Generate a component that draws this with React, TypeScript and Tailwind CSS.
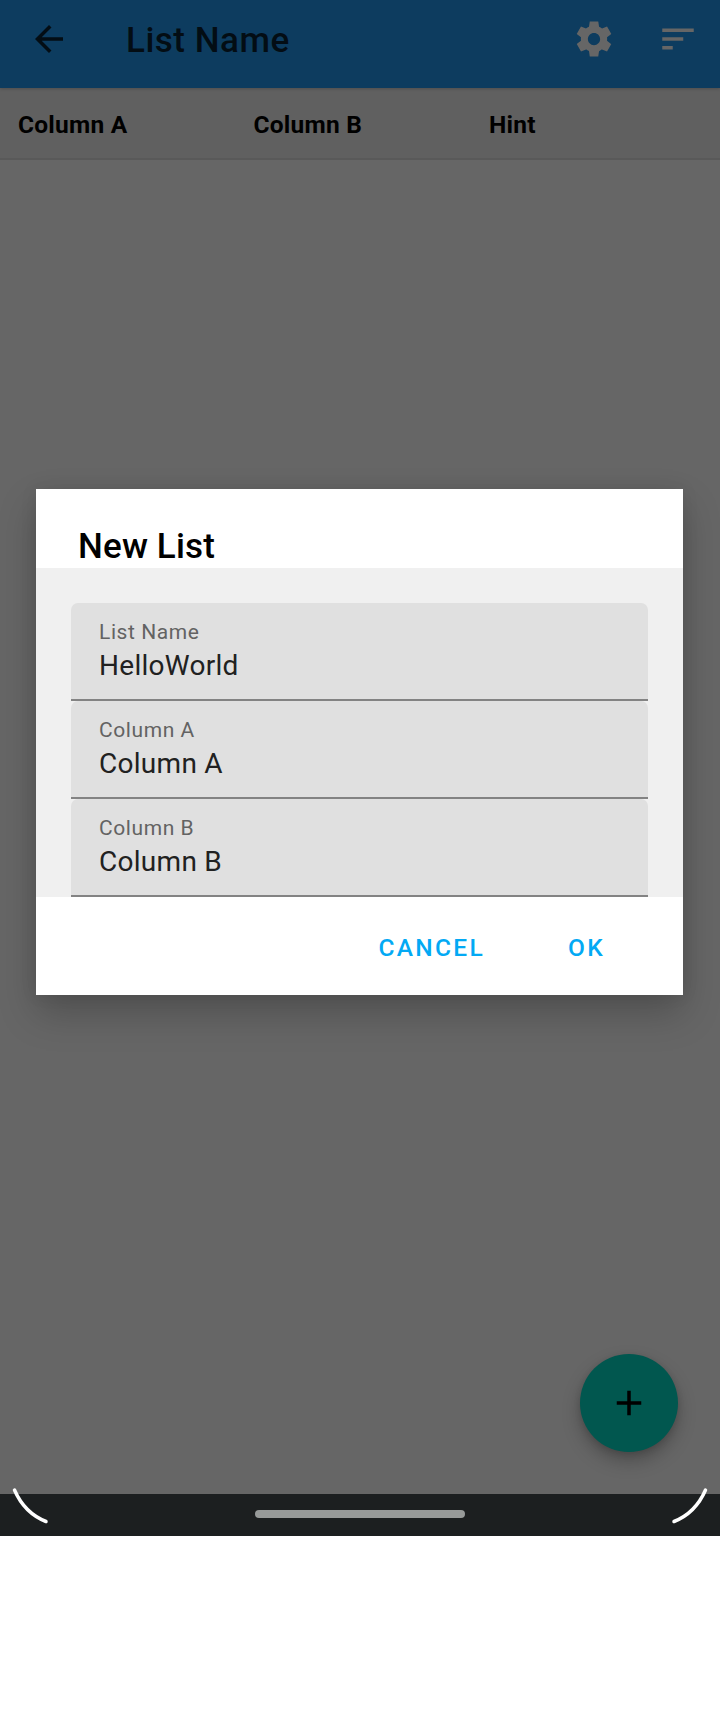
import React from "react";

const columns = ["Column A", "Column B", "Hint"];

const fields = [
  { label: "List Name", value: "HelloWorld" },
  { label: "Column A", value: "Column A" },
  { label: "Column B", value: "Column B" },
];

function Icon({ d, className }: { d: string; className: string }) {
  return (
    <svg viewBox="0 0 24 24" className={`size-[42px] shrink-0 fill-current ${className}`}>
      <path d={d} />
    </svg>
  );
}

const BACK = "M20 11H7.83l5.59-5.59L12 4l-8 8 8 8 1.41-1.41L7.83 13H20v-2z";
const SORT = "M3 18h6v-2H3v2zM3 6v2h18V6H3zm0 7h12v-2H3v2z";
const PLUS = "M19 13h-6v6h-2v-6H5v-2h6V5h2v6h6v2z";
const GEAR =
  "M19.44 12.99l-.01.02c.04-.33.08-.67.08-1.01 0-.34-.03-.66-.07-.99l.01.02 2.44-1.92-2.43-4.22-2.87 1.16.01.01c-.52-.4-1.09-.74-1.71-1h.01L14.44 2H9.57l-.44 3.07h.01c-.62.26-1.19.6-1.71 1l.01-.01-2.88-1.17-2.44 4.22 2.44 1.92.01-.02c-.04.33-.07.65-.07.99 0 .34.03.68.08 1.01l-.01-.02-2.1 1.65-.33.26 2.43 4.2 2.88-1.15-.02-.04c.53.41 1.1.75 1.73 1.01h-.03L9.58 22h4.85s.03-.18.06-.42l.38-2.65h-.01c.62-.26 1.2-.6 1.73-1.01l-.02.04 2.88 1.15 2.43-4.2s-.14-.12-.33-.26l-2.11-1.66zM12 15.5c-1.93 0-3.5-1.57-3.5-3.5s1.57-3.5 3.5-3.5 3.5 1.57 3.5 3.5-1.57 3.5-3.5 3.5z";

function AppBar() {
  return (
    <header className="relative z-10 flex h-[88px] items-start bg-[#0d3c5f] pl-7 pr-[21px] pt-[18px] shadow-[0_1px_3px_rgba(0,0,0,0.2)]">
      <Icon d={BACK} className="text-[#030d14]" />
      <h1 className="ml-[56px] flex-1 pt-[2px] text-[35px] font-medium leading-[42px] tracking-[0.5px] text-[#030d14]">
        List Name
      </h1>
      <Icon d={GEAR} className="text-[#666666]" />
      <Icon d={SORT} className="ml-[42px] text-[#666666]" />
    </header>
  );
}

function ColumnHeader() {
  return (
    <div className="grid h-[72px] grid-cols-[235.5px_235.5px_1fr] items-center border-b-2 border-[#595959] bg-[#606060] pl-[18px] pt-[3px]">
      {columns.map((name) => (
        <span key={name} className="text-[24.5px] font-bold leading-8 tracking-[0.25px] text-black">
          {name}
        </span>
      ))}
    </div>
  );
}

function NavigationBar() {
  return (
    <footer className="relative flex h-[42px] justify-center bg-[#1c1f20] pt-4">
      <div className="h-2 w-[210px] rounded-full bg-[#979a99]" />
      <svg
        viewBox="0 0 720 50"
        className="absolute bottom-0 left-0 h-[50px] w-[720px] fill-none stroke-white"
        strokeWidth="3.5"
        strokeLinecap="round"
      >
        <path d="M14.5 4Q24.5 27 46 35.5" />
        <path d="M705.5 4Q695.5 27 674 35.5" />
      </svg>
    </footer>
  );
}

function Field({ label, value }: { label: string; value: string }) {
  return (
    <div className="bg-[#f0f0f0]">
      <div className="h-[98px] rounded-t-[7px] border-b-2 border-[#838383] bg-[#e0e0e0] pl-7 pt-[17px]">
        <div className="text-[21px] leading-[25px] tracking-[0.58px] text-[#636363]">{label}</div>
        <div className="mt-[4px] text-[28px] leading-[33px] tracking-[0.01em] text-[#212121]">{value}</div>
      </div>
    </div>
  );
}

function NewListDialog() {
  return (
    <div className="absolute inset-0 px-9 pt-[489px]">
      <section
        role="dialog"
        className="h-[506px] w-[647px] bg-white shadow-[0_18px_36px_rgba(0,0,0,0.22),0_0_16px_rgba(0,0,0,0.08)]"
      >
        <h2 className="h-[79px] pl-[42px] pt-[37px] text-[35px] font-medium leading-[41px] tracking-[0.15px] text-black">
          New List
        </h2>
        <div className="bg-[#f0f0f0] px-[35px] pt-[35px]">
          {fields.map((field) => (
            <Field key={field.label} {...field} />
          ))}
        </div>
        <div className="flex justify-end gap-[83px] pr-[78px] pt-[35px] text-[24.5px] font-medium leading-8 tracking-[2.3px] text-[#03a9f4]">
          <button>CANCEL</button>
          <button>OK</button>
        </div>
      </section>
    </div>
  );
}

export default function App() {
  return (
    <div className="h-[1712px] w-[720px] overflow-hidden bg-white font-['Roboto',sans-serif]">
      <div className="relative flex h-[1536px] flex-col bg-[#666666]">
        <AppBar />
        <ColumnHeader />
        <main className="flex flex-1 items-end justify-end pb-[42px] pr-[42px]">
          <button className="flex size-[98px] items-center justify-center rounded-full bg-[#01574f] text-black shadow-[0_9px_18px_rgba(0,0,0,0.25),0_2px_6px_rgba(0,0,0,0.12)]">
            <Icon d={PLUS} className="" />
          </button>
        </main>
        <NavigationBar />
        <div className="absolute inset-0 z-20">
          <NewListDialog />
        </div>
      </div>
    </div>
  );
}
